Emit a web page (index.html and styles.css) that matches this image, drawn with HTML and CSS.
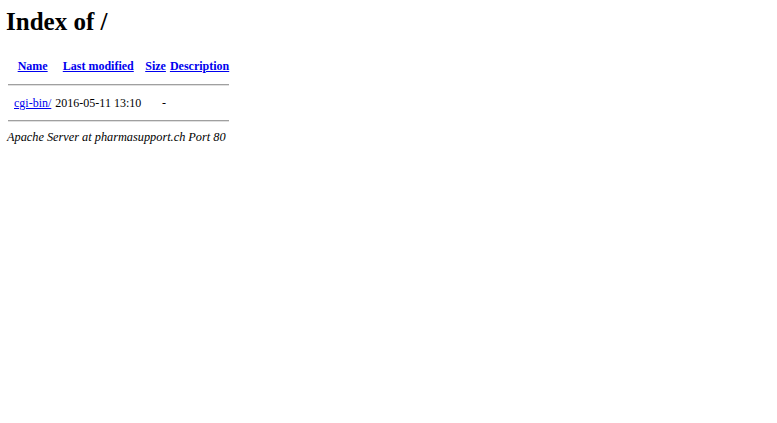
FILE: index.html
```html
<!DOCTYPE html>
<html>
<head>
<title>Index of /</title>
<link rel="stylesheet" href="styles.css">
</head>
<body class="page">
<h1 class="title">Index of /</h1>
<table class="listing">
<tr><th class="ico"></th><th><a href="#">Name</a></th><th><a href="#">Last modified</a></th><th><a href="#">Size</a></th><th><a href="#">Description</a></th></tr>
<tr><th colspan="5" class="sep"><hr class="rule"></th></tr>
<tr><td class="ico"></td><td><a href="#">cgi-bin/</a></td><td class="right">2016-05-11 13:10</td><td class="right">- </td><td>&nbsp;</td></tr>
<tr><th colspan="5" class="sep"><hr class="rule"></th></tr>
</table>
<address class="addr">Apache Server at pharmasupport.ch Port 80</address>
</body>
</html>
```
FILE: styles.css
```css
html { background: #fff; }
.page {
  margin: 6px;
  font-family: "Liberation Serif", serif;
  font-size: 12px;
  color: #000;
}
.title {
  font-size: 25px;
  font-weight: bold;
  margin: 2px 0 15px;
}
.listing {
  border-collapse: separate;
  border-spacing: 2px;
  margin-left: -1px;
}
.listing th, .listing td {
  white-space: nowrap;
}
.listing th { font-weight: bold; padding: 6px 1px; }
.listing th.sep { padding: 0 1px; }
.listing td { padding: 6px 1px 5px; }
.ico { width: 2px; }
.right { text-align: right; }
.listing a { color: #0000ee; }
.rule {
  margin: 2px 0;
  border: 0;
  border-top: 1px solid #a0a0a0;
  border-bottom: 1px solid #e0e0e0;
  height: 0;
}
.addr {
  font-style: italic;
  font-size: 12.3px;
  margin-top: 4px;
  margin-left: 1px;
}
```
